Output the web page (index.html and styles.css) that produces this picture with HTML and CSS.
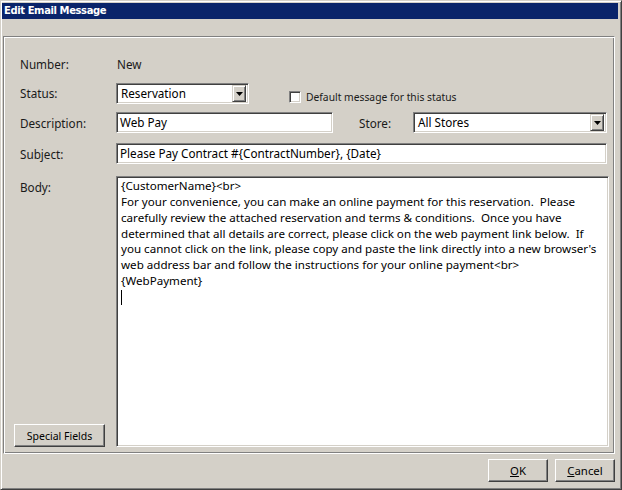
FILE: index.html
```html
<!DOCTYPE html>
<html>
<head>
<meta charset="utf-8">
<title>Edit Email Message</title>
<link rel="stylesheet" href="styles.css">
</head>
<body>
<div class="window">
  <div class="titlebar">Edit Email Message</div>
  <div class="client">
    <div class="panel">
      <div class="row r-number">
        <div class="label">Number:</div>
        <div class="value">New</div>
      </div>
      <div class="row r-status">
        <div class="label">Status:</div>
        <div class="select sel-status">
          <span class="sel-text">Reservation</span>
          <span class="drop"><svg width="7" height="4" viewBox="0 0 7 4"><path d="M0 0H7L3.5 4Z" fill="#000"/></svg></span>
        </div>
        <div class="check"><span class="box"></span><span class="check-text">Default message for this status</span></div>
      </div>
      <div class="row r-desc">
        <div class="label">Description:</div>
        <div class="field f-desc">Web Pay</div>
        <div class="store-label">Store:</div>
        <div class="select sel-store">
          <span class="sel-text">All Stores</span>
          <span class="drop"><svg width="7" height="4" viewBox="0 0 7 4"><path d="M0 0H7L3.5 4Z" fill="#000"/></svg></span>
        </div>
      </div>
      <div class="row r-subject">
        <div class="label">Subject:</div>
        <div class="field f-subject">Please Pay Contract #{ContractNumber}, {Date}</div>
      </div>
      <div class="row r-body">
        <div class="body-side">
          <div class="label body-label">Body:</div>
          <div class="btn special">Special Fields</div>
        </div>
        <div class="textarea">
          <div class="line">{CustomerName}&lt;br&gt;</div>
          <div class="line">For your convenience, you can make an online payment for this reservation.&nbsp; Please</div>
          <div class="line">carefully review the attached reservation and terms &amp; conditions.&nbsp; Once you have</div>
          <div class="line">determined that all details are correct, please click on the web payment link below.&nbsp; If</div>
          <div class="line">you cannot click on the link, please copy and paste the link directly into a new browser's</div>
          <div class="line">web address bar and follow the instructions for your online payment&lt;br&gt;</div>
          <div class="line">{WebPayment}</div>
          <div class="line"><span class="caret"></span></div>
        </div>
      </div>
    </div>
    <div class="footer">
      <div class="btn ok"><span class="u">O</span>K</div>
      <div class="btn cancel"><span class="u">C</span>ancel</div>
    </div>
  </div>
</div>
</body>
</html>
```

FILE: styles.css
```css
* { box-sizing: border-box; }
html, body { margin: 0; padding: 0; background: #d4d0c8; }
body { font-family: "Noto Sans", "Open Sans", sans-serif; font-size: 11.7px; color: #1a1a1a; }

.window {
  width: 622px;
  height: 490px;
  background: #d4d0c8;
  border: 1px solid;
  border-color: #d4d0c8 #404040 #404040 #d4d0c8;
  box-shadow: inset 1px 1px #fff, inset -1px -1px #808080;
  padding: 2px 3px 1px 1px;
}

.titlebar {
  height: 16px;
  background: #0a246a;
  color: #fff;
  font-family: "DejaVu Sans", sans-serif;
  font-weight: bold;
  font-size: 10px;
  line-height: 16px;
  padding-left: 2px;
  letter-spacing: -0.4px;
}

.client { padding-top: 17px; }

.panel {
  margin: 0 3px 0 1px;
  height: 418px;
  border: 1px solid;
  border-color: #808080 #fff #fff #808080;
  box-shadow: inset 1px 1px #fff, inset -1px -1px #808080;
  padding: 16px 0 0 10px;
}

.row { display: flex; align-items: center; height: 21px; }
.r-status { margin-top: 9px; align-items: flex-start; }
.r-desc { margin-top: 8px; }
.r-subject { margin-top: 10px; }
.r-body { margin-top: 12px; height: 271px; align-items: stretch; }

.label { width: 102px; padding-left: 6px; flex: none; }
.r-status .label { line-height: 21px; }
.value { padding-left: 1px; }

.field, .select, .textarea {
  background: #fff;
  border: 1px solid;
  border-color: #808080 #fff #fff #808080;
  box-shadow: inset 1px 1px #404040, inset -1px -1px #d4d0c8;
  color: #000;
}
.field { height: 21px; line-height: 19px; padding-left: 3px; white-space: nowrap; }
.f-desc { width: 217px; }
.f-subject { width: 491px; }

.select { height: 21px; display: flex; align-items: center; padding: 2px; }
.sel-text { flex: 1; padding-left: 2px; line-height: 17px; white-space: nowrap; }
.sel-status { width: 133px; }
.sel-store { width: 194px; }

.drop {
  width: 14px;
  height: 17px;
  background: #d4d0c8;
  border: 1px solid;
  border-color: #d4d0c8 #404040 #404040 #d4d0c8;
  box-shadow: inset 1px 1px #fff, inset -1px -1px #808080;
  display: flex;
  align-items: center;
  justify-content: center;
  flex: none;
}

.check { display: flex; align-items: center; margin: 7px 0 0 40px; }
.box {
  width: 12px; height: 12px;
  background: #fff;
  border: 1px solid;
  border-color: #808080 #fff #fff #808080;
  box-shadow: inset 1px 1px #404040, inset -1px -1px #d4d0c8;
  margin-right: 5px;
}
.check-text { font-size: 10.3px; white-space: nowrap; }

.store-label { width: 54px; margin-left: 26px; }

.body-side { width: 102px; display: flex; flex-direction: column; justify-content: space-between; flex: none; }
.body-label { padding-top: 3px; line-height: 16px; }

.textarea {
  width: 493px;
  padding: 1px 0 0 4px;
  line-height: 15.85px;
  font-size: 11.6px;
  overflow: hidden;
}
.line { white-space: nowrap; height: 15.85px; }
.caret { display: inline-block; width: 1px; height: 15px; background: #000; vertical-align: middle; }

.btn {
  background: #d4d0c8;
  border: 1px solid;
  border-color: #fff #404040 #404040 #fff;
  box-shadow: inset -1px -1px #808080;
  display: flex;
  align-items: center;
  justify-content: center;
  color: #000;
  height: 23px;
  font-size: 11.4px;
}
.special { width: 91px; font-size: 10.5px; }

.footer { display: flex; justify-content: flex-end; gap: 7px; margin-top: 5px; padding-right: 3px; }
.ok, .cancel { width: 60px; }
.u { text-decoration: underline; }
```
